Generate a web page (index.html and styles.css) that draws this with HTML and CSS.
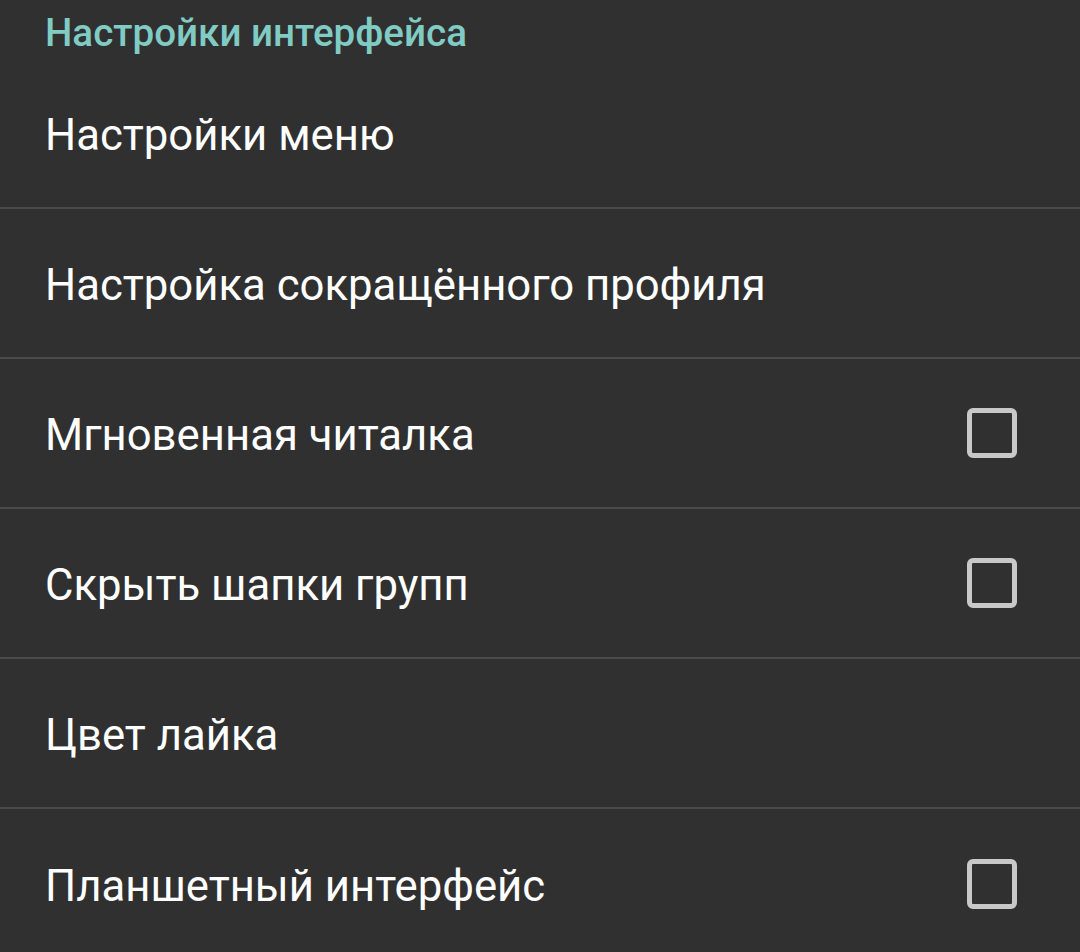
FILE: index.html
```html
<!DOCTYPE html>
<html lang="ru">
<head>
<meta charset="utf-8">
<link rel="stylesheet" href="styles.css">
</head>
<body>
<div class="screen">
  <div class="section-title">Настройки интерфейса</div>
  <div class="row"><span class="label">Настройки меню</span></div>
  <div class="row"><span class="label">Настройка сокращённого профиля</span></div>
  <div class="row"><span class="label">Мгновенная читалка</span><span class="check"></span></div>
  <div class="row"><span class="label">Скрыть шапки групп</span><span class="check"></span></div>
  <div class="row"><span class="label">Цвет лайка</span></div>
  <div class="row"><span class="label">Планшетный интерфейс</span><span class="check"></span></div>
</div>
</body>
</html>
```
FILE: styles.css
```css
html, body {
  margin: 0;
  padding: 0;
  background: #303030;
}
.screen {
  width: 1080px;
  height: 952px;
  overflow: hidden;
  background: #303030;
  font-family: Roboto, "Noto Sans", sans-serif;
}
.section-title {
  height: 59px;
  padding-left: 45px;
  color: #80cbc4;
  font-weight: 500;
  font-size: 38.6px;
  line-height: 66px;
}
.row {
  height: 150px;
  box-sizing: border-box;
  display: flex;
  align-items: center;
  justify-content: space-between;
  padding: 3px 63px 0 45px;
  border-bottom: 2px solid #4a4a4a;
  color: #ffffff;
  font-size: 43.7px;
}
.row:last-child {
  border-bottom: none;
}
.check {
  width: 50px;
  height: 50px;
  margin-bottom: 4px;
  box-sizing: border-box;
  border: 5px solid #c8c8c8;
  border-radius: 6px;
}
```
